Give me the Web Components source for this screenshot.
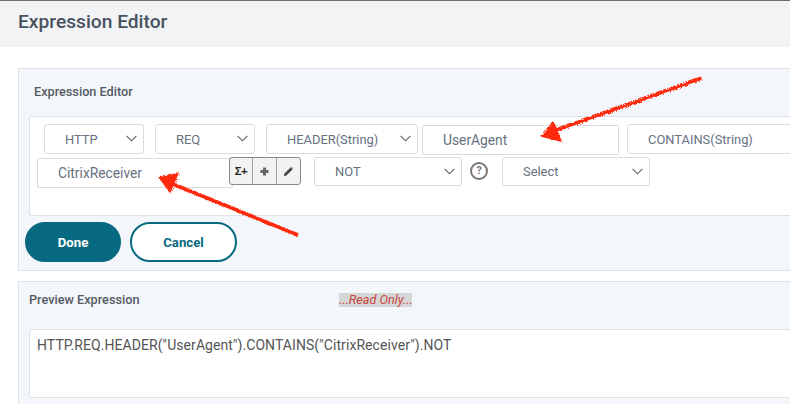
<!DOCTYPE html>
<html>
<head>
<meta charset="utf-8">
<style>
  html, body { margin: 0; padding: 0; height: 100%; overflow: hidden; background: #fff; }
  body { width: 790px; height: 404px; position: relative; font-family: "Roboto", "Liberation Sans", sans-serif; }
</style>
</head>
<body>
<page-header>Expression Editor</page-header>

<editor-panel title-text="Expression Editor" head-top="16" head-left="15" style="margin-top:21px;height:203px">
  <white-box style="margin:17px 0 0 10px;height:91px;padding:7px 0 0 7px">
    <form-row>
      <pick-box style="margin-left:7px;width:100px">HTTP</pick-box>
      <pick-box style="margin-left:11px;width:100px">REQ</pick-box>
      <pick-box style="margin-left:11px;width:152px">HEADER(String)</pick-box>
      <text-box style="margin:1px 0 0 4px;width:197px">UserAgent</text-box>
      <pick-box style="margin-left:8px;width:200px">CONTAINS(String)</pick-box>
    </form-row>
    <form-row style="margin-top:2px">
      <text-box style="margin-top:1px;width:196px">CitrixReceiver</text-box>
      <tool-group style="margin-left:-4px"></tool-group>
      <pick-box style="margin-left:13px;width:148px;height:29px">NOT</pick-box>
      <help-mark style="margin:5px 0 0 8px"></help-mark>
      <pick-box style="margin-left:14px;width:148px;height:29px">Select</pick-box>
    </form-row>
  </white-box>
  <form-row style="margin:6px 0 0 6px">
    <round-btn kind="solid" style="width:96px">Done</round-btn>
    <round-btn kind="line" style="margin-left:9px;width:107px">Cancel</round-btn>
  </form-row>
</editor-panel>

<editor-panel title-text="Preview Expression" note="...Read Only..." head-top="11" head-left="10" style="margin-top:10px;height:140px">
  <white-box style="margin:22px 0 0 10px;height:60px;padding:7px 0 0 7px;color:#555;font-size:14px;letter-spacing:.07px;line-height:16px">HTTP.REQ.HEADER("UserAgent").CONTAINS("CitrixReceiver").NOT</white-box>
</editor-panel>

<red-arrows></red-arrows>

<script>
class PageHeader extends HTMLElement {
    constructor() {
        super();
        this.attachShadow({mode: "open"}).innerHTML = `<style>
            :host { display: block; height: 47px; box-sizing: border-box; border-top: 1px solid #6b6d70; background: #f1f3f5; padding: 10px 0 0 18px;
                font-size: 19.2px; font-weight: 500; line-height: 22px; color: #48525f; }
        </style><slot></slot>`;
    }
}
class EditorPanel extends HTMLElement {
    constructor() {
        super();
        this.attachShadow({mode: "open"});
    }
    connectedCallback() {
        let note = this.getAttribute("note");
        this.shadowRoot.innerHTML = `<style>
            :host { display: block; box-sizing: border-box; margin-left: 18px; border: 1px solid #dfe3e8; border-right: 0; background: #f3f6fa; width: 772px; }
            header { display: flex; height: 14px; padding: ${this.getAttribute("head-top")}px 0 0 ${this.getAttribute("head-left")}px; font-size: 12.7px; line-height: 14px; font-weight: 500; color: #555b63; }
            .note { position: absolute; left: 339px; height: 14px; background: #d6d6d6; color: #c8453c; font-weight: 400; font-style: italic; width: 73px; text-align: center; overflow: hidden; white-space: nowrap; }
        </style>
        <header><span>${this.getAttribute("title-text")}</span>${note ? `<span class="note">${note}</span>` : ""}</header>
        <slot></slot>`;
    }
}
class WhiteBox extends HTMLElement {
    constructor() {
        super();
        this.attachShadow({mode: "open"}).innerHTML = `<style>
            :host { display: block; background: #fff; border: 1px solid #dfe3e8; border-right: 0; border-radius: 2px 0 0 2px; }
        </style><slot></slot>`;
    }
}
class FormRow extends HTMLElement {
    constructor() {
        super();
        this.attachShadow({mode: "open"}).innerHTML = `<style>
            :host { display: flex; align-items: flex-start; white-space: nowrap; }
        </style><slot></slot>`;
    }
}
class PickBox extends HTMLElement {
    constructor() {
        super();
        this.attachShadow({mode: "open"}).innerHTML = `<style>
            :host { display: flex; align-items: center; flex: none; box-sizing: border-box; height: 30px; background: #fff; border: 1px solid #d9dbde; border-radius: 3px;
                padding-left: 20px; font-size: 12.9px; color: #66717f; position: relative; }
            svg { position: absolute; right: 6px; top: 10px; }
        </style><slot></slot>
        <svg width="11" height="7" viewBox="0 0 11 7"><path d="M.6.8 5.5 5.8 10.4.8" fill="none" stroke="#5a5f66" stroke-width="1.1"/></svg>`;
    }
}
class TextBox extends HTMLElement {
    constructor() {
        super();
        this.attachShadow({mode: "open"}).innerHTML = `<style>
            :host { display: flex; align-items: center; flex: none; box-sizing: border-box; height: 30px; background: #fff; border: 1px solid #d9dbde; border-radius: 2px;
                padding-left: 20px; font-size: 13.8px; color: #66717f; }
        </style><slot></slot>`;
    }
}
class ToolGroup extends HTMLElement {
    constructor() {
        super();
        this.attachShadow({mode: "open"}).innerHTML = `<style>
            :host { display: flex; flex: none; height: 28px; box-sizing: border-box; border: 1px solid #85888c; border-radius: 3px; background: #f2f2f2; position: relative; }
            div { display: flex; align-items: center; justify-content: center; box-sizing: border-box; width: 24px; border-left: 1px solid #a0a2a5; }
            .sum { width: 22px; border-left: 0; font: 700 11.5px "Liberation Sans", sans-serif; color: #222; letter-spacing: -.5px; }
        </style>
        <div class="sum">Σ+</div>
        <div><svg width="9" height="9" viewBox="0 0 9 9"><path d="M3 .5h3V3h2.5v3H6v2.5H3V6H.5V3H3z" fill="#666"/></svg></div>
        <div><svg width="11" height="11" viewBox="0 0 11 11"><path d="M.8 10.2 1.5 7.6 7.8 1.3 9.7 3.2 3.4 9.5z" fill="#444"/><path d="M8.5.8 10.2 2.5" stroke="#888" stroke-width="1"/></svg></div>`;
    }
}
class HelpMark extends HTMLElement {
    constructor() {
        super();
        this.attachShadow({mode: "open"}).innerHTML = `<style>
            :host { display: block; flex: none; width: 18px; height: 18px; box-sizing: border-box; border: 2px solid #777; border-radius: 50%;
                font: 700 10.5px/14px "Roboto", sans-serif; color: #777; text-align: center; }
        </style>?`;
    }
}
class RoundBtn extends HTMLElement {
    constructor() {
        super();
        this.attachShadow({mode: "open"});
    }
    connectedCallback() {
        let solid = this.getAttribute("kind") === "solid";
        this.shadowRoot.innerHTML = `<style>
            :host { display: flex; align-items: center; justify-content: center; box-sizing: border-box; height: 40px; border-radius: 20px; border: 2px solid #076a80;
                background: ${solid ? "#076a80" : "#fff"}; color: ${solid ? "#fff" : "#076a80"}; font-size: 13.2px; font-weight: 700; }
        </style><slot></slot>`;
    }
}
class RedArrows extends HTMLElement {
    constructor() {
        super();
        // hand drawn arrows lying over the form
        this.attachShadow({mode: "open"}).innerHTML = `<style>
            :host { position: absolute; left: 0; top: 0; width: 790px; height: 404px; pointer-events: none; }
        </style>
        <svg width="790" height="404" viewBox="0 0 790 404">
            <filter id="rough"><feTurbulence baseFrequency=".35" numOctaves="2" seed="3"/><feDisplacementMap in="SourceGraphic" scale="1.5"/></filter>
            <g fill="#ff2a10" stroke="#ff2a10" stroke-linejoin="round" filter="url(#rough)">
                <path d="M701 78 553 131" stroke-width="3.6" fill="none"/>
                <path d="M541 136 553 122 561 141z" stroke-width="1.5"/>
                <path d="M298 235 168 182" stroke-width="3.6" fill="none"/>
                <path d="M159 177 178 173 170 192z" stroke-width="1.5"/>
            </g>
        </svg>`;
    }
}
customElements.define('page-header', PageHeader);
customElements.define('editor-panel', EditorPanel);
customElements.define('white-box', WhiteBox);
customElements.define('form-row', FormRow);
customElements.define('pick-box', PickBox);
customElements.define('text-box', TextBox);
customElements.define('tool-group', ToolGroup);
customElements.define('help-mark', HelpMark);
customElements.define('round-btn', RoundBtn);
customElements.define('red-arrows', RedArrows);
</script>
</body>
</html>
